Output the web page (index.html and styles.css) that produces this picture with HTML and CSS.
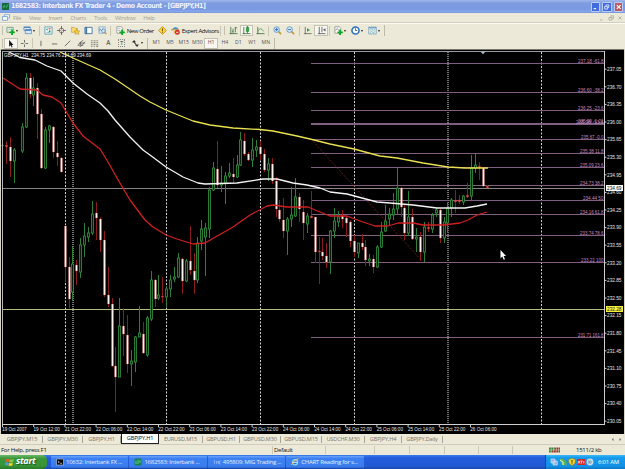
FILE: index.html
```html
<!DOCTYPE html>
<html lang="en">
<head>
  <meta charset="UTF-8" />
  <meta name="viewport" content="width=device-width, initial-scale=1.0"/>
  <title>1682583: Interbank FX Trader 4 - Demo Account - [GBPJPY,H1]</title>
  <link rel="stylesheet" href="styles.css">
</head>
<body>
  <div class="titlebar">
    <svg class="logo" viewBox="0 0 8 8"><rect width="8" height="8" rx="1" fill="#14683c"/><path d="M1.5 6V3M3 5V2M5 6V3M6.5 4V1.5" stroke="#55c47c" stroke-width=".8"/></svg>
    <span class="title">1682583: Interbank FX Trader 4 - Demo Account - [GBPJPY,H1]</span>
    <div class="winbtns">
      <svg viewBox="0 0 9 9"><path d="M2 6.5H5" stroke="#fff" stroke-width="1.4"/></svg>
      <svg viewBox="0 0 9 9"><path d="M3.5 3.5V2H7V5H5.5M2 4H5.5V7H2Z" stroke="#fff" fill="none" stroke-width=".9"/></svg>
      <svg class="close" viewBox="0 0 9 9"><path d="M2.2 2.2 6.8 6.8M6.8 2.2 2.2 6.8" stroke="#fff" stroke-width="1.3"/></svg>
    </div>
  </div>

  <div class="menubar">
    <svg class="logo" viewBox="0 0 8 7"><path d="M2.5 3V.7H7.5V4H6M.5 2.5H5.5V6.3H.5Z" fill="#fff" stroke="#79a7d8" stroke-width=".9"/></svg>
    <span>File</span><span>View</span><span>Insert</span><span>Charts</span><span>Tools</span><span>Window</span><span>Help</span>
    <svg class="mdi" viewBox="0 0 24 6"><path d="M1 5H3.5M12 2V.8H14.5V3.5H13.3M10 2.5H13V5H10ZM19.5 1.5 22.5 4.5M22.5 1.5 19.5 4.5" fill="none" stroke="#a9a797" stroke-width=".8"/></svg>
  </div>

  <div class="toolbar main">
    <i class="grip"></i>
    <div class="drop"><svg viewBox="0 0 10 10"><path d="M1 1.5H8V7H1Z" fill="#e8f5e8" stroke="#5a8c69" stroke-width=".8"/><path d="M2.5 5 4 3 5 4 7 2.5" stroke="#4a9aa5" fill="none" stroke-width=".6"/><path d="M6.8 4V10M3.8 7H9.8" stroke="#12a522" stroke-width="2"/></svg></div>
    <div class="drop"><svg viewBox="0 0 10 10"><path d="M1 1H8V5H1ZM2.5 4H9.5V8.5H2.5Z" fill="#d6e8fa" stroke="#5688bb" stroke-width=".8"/><path d="M1 1.5H8M2.5 4.5H9.5" stroke="#3e77bb"/></svg></div>
    <i class="sep"></i>
    <div class="btn"><svg viewBox="0 0 10 10"><path d="M1 1H9V9H1Z" fill="#f4faff" stroke="#5f9dc4"/><path d="M2 4 4 2.5 4 5ZM4.5 7.5 6.5 4 7.5 7Z" fill="#209a42"/><path d="M5 3H7.5M3 7H4" stroke="#d04a32"/></svg></div>
    <div class="btn"><svg viewBox="0 0 10 10"><circle cx="5" cy="5" r="2.6" fill="none" stroke="#666" stroke-width=".8"/><path d="M5 0V4M5 6V10M0 5H4M6 5H10" stroke="#555" stroke-width=".9"/></svg></div>
    <div class="btn"><svg viewBox="0 0 10 10"><path d="M.5 1.5H3.5L4.5 2.5H7V7H.5Z" fill="#f7db72" stroke="#b58c26" stroke-width=".6"/><path d="M6.5 3.5 7.4 5.5 9.7 5.7 8 7.2 8.6 9.5 6.5 8.3 4.4 9.5 5 7.2 3.4 5.7 5.6 5.5Z" fill="#ffcf2d" stroke="#aa7d17" stroke-width=".5"/></svg></div>
    <div class="btn"><svg viewBox="0 0 10 10"><path d="M1 1.5H9V8.5H1Z" fill="#fff" stroke="#3f75a8"/><path d="M2.5 1V9" stroke="#3f75a8" stroke-width="2"/></svg></div>
    <div class="btn"><svg viewBox="0 0 10 10"><path d="M1 1H8V8H1Z" fill="#edf5fb" stroke="#7399bc" stroke-width=".8"/><path d="M2 6V3L4 5 6 2" fill="none" stroke="#397da9" stroke-width=".8"/><circle cx="6" cy="5.5" r="2" fill="#d5e8f8" stroke="#4a79a5" stroke-width=".7"/><path d="M7.5 7 9.5 9" stroke="#c09238" stroke-width="1.2"/></svg></div>
    <i class="sep"></i>
    <div class="order"><svg viewBox="0 0 10 10"><path d="M1 .8H6L7.5 2.5V8H1Z" fill="#fff" stroke="#708070" stroke-width=".7"/><path d="M2 3H5M2 5H5" stroke="#789" stroke-width=".6"/><path d="M6.8 4V10M3.8 7H9.8" stroke="#12a522" stroke-width="2"/></svg><span>New Order</span></div>
    <div class="warn"><svg viewBox="0 0 10 10"><path d="M5 .6 9.4 5 5 9.4 .6 5Z" fill="#fbd23d" stroke="#bd8a1c" stroke-width=".8"/><path d="M5 2.6V5.8M5 6.5V7.5" stroke="#725010"/></svg></div>
    <div class="expert"><svg viewBox="0 0 10 10"><path d="M1 4Q5-2 9 4Z" fill="#4d93ca"/><path d="M0 4.3H9" stroke="#b88b25"/><path d="M2 5H7V8H3Z" fill="#f1cf77"/><circle cx="7" cy="7" r="2.8" fill="#d43425"/><path d="M5.8 7H8.2" stroke="#fff"/></svg><span>Expert Advisors</span></div>
    <i class="sep"></i><i class="grip"></i>
    <div class="btn"><svg viewBox="0 0 10 10"><path d="M2 1V9M0.5 8.5H9.5M4.5 3V8M7 1V7M3.5 6H4.5M7 2H9" stroke="#3b6b3b" stroke-width=".9"/></svg></div>
    <div class="btn pressed"><svg viewBox="0 0 10 10"><path d="M2 1V9M0.5 8.5H9.5M6 0V8" stroke="#3b6b3b" stroke-width=".9"/><path d="M4.8 1.5H7.5V6H4.8Z" fill="#26b53b" stroke="#137323" stroke-width=".6"/></svg></div>
    <div class="btn"><svg viewBox="0 0 10 10"><path d="M2 1V9M0.5 8.5H9.5" stroke="#3b6b3b" stroke-width=".9"/><path d="M2 6Q5 0 8.5 6" fill="none" stroke="#43a152" stroke-width=".9"/></svg></div>
    <i class="sep"></i>
    <div class="btn"><svg viewBox="0 0 10 10"><path d="M6 6 9 9" stroke="#c9982f" stroke-width="1.8"/><circle cx="4" cy="4" r="3.1" fill="#d9edff" stroke="#5b94c8"/><path d="M2.3 4H5.7M4 2.3V5.7" stroke="#29649b"/></svg></div>
    <div class="btn"><svg viewBox="0 0 10 10"><path d="M6 6 9 9" stroke="#c9982f" stroke-width="1.8"/><circle cx="4" cy="4" r="3.1" fill="#d9edff" stroke="#5b94c8"/><path d="M2.3 4H5.7" stroke="#29649b"/></svg></div>
    <i class="sep"></i>
    <div class="btn"><svg viewBox="0 0 10 10"><path d="M2.5 1V9M1 8.5H9.5" stroke="#596859" stroke-width=".9"/><path d="M4.5 2.5 8 4.5 4.5 6.5Z" fill="#2ca13d"/></svg></div>
    <div class="btn pressed"><svg viewBox="0 0 10 10"><path d="M2.5 1V9M1 8.5H9.5M5.5 1V7" stroke="#555" stroke-width=".9"/><path d="M9.5 2.5 6.5 4.2 9.5 6Z" fill="#666"/></svg></div>
    <i class="sep"></i>
    <div class="drop"><svg viewBox="0 0 10 10"><path d="M1 .8H6L7.5 2.5V8H1Z" fill="#fff" stroke="#708070" stroke-width=".7"/><path d="M2 5Q4 0 5 5" stroke="#666" fill="none" stroke-width=".7"/><path d="M6.8 4V10M3.8 7H9.8" stroke="#12a522" stroke-width="2"/></svg></div>
    <div class="drop"><svg viewBox="0 0 10 10"><circle cx="5" cy="5" r="4" fill="#fff" stroke="#2971c0" stroke-width="1.7"/><path d="M5 2.5V5H7" fill="none" stroke="#333" stroke-width=".8"/></svg></div>
    <div class="drop"><svg viewBox="0 0 10 10"><path d="M.8 1.2H9.2V8.8H.8Z" fill="#e8f4fb" stroke="#6c96b8" stroke-width=".8"/><path d="M1 2H9" stroke="#6496c4" stroke-width="1.3"/><path d="M2 5 4 3.5 6 5 8 3.5M2 7.5 4 6 6 7.5 8 6" fill="none" stroke="#5e9a7d" stroke-width=".7"/></svg></div>
    <i class="end"></i>
  </div>

  <div class="toolbar tools">
    <i class="grip"></i>
    <div class="btn pressed"><svg viewBox="0 0 10 10"><path d="M3.5 1V8.5L5.2 7 6.3 9.5 7.3 9 6.2 6.6H8.3Z" fill="#111"/></svg></div>
    <div class="btn"><svg viewBox="0 0 10 10"><path d="M5 1V4M5 6V9M1 5H4M6 5H9" stroke="#555" stroke-width=".9"/></svg></div>
    <i class="sep"></i>
    <div class="btn"><svg viewBox="0 0 10 10"><path d="M5.5 2V8" stroke="#555" stroke-width=".9"/></svg></div>
    <div class="btn"><svg viewBox="0 0 10 10"><path d="M2 5.5H8" stroke="#555" stroke-width=".9"/></svg></div>
    <div class="btn"><svg viewBox="0 0 10 10"><path d="M2 8 8 2" stroke="#555" stroke-width=".9"/></svg></div>
    <div class="btn"><svg viewBox="0 0 10 10"><path d="M1 7 7 1M3 9 9 3M2 4.5H9M1 7H7M4 3V7" stroke="#555" stroke-width=".8"/></svg></div>
    <div class="btn"><svg viewBox="0 0 10 10"><path d="M1 2H9M1 4H9M1 6H9M1 8H6" stroke="#666" stroke-width=".8" stroke-dasharray="1.2 .5"/><path d="M7 8H9" stroke="#444"/></svg></div>
    <div class="btn letter">A</div>
    <div class="btn letter"><span class="boxed">T</span></div>
    <div class="drop"><svg viewBox="0 0 10 10"><path d="M1 3.5 3.5 1 5.5 3.5H4.3L6 6.2H8.8L6.8 9 4.5 6.8H5.3L3 3.8Z" fill="#333"/></svg></div>
    <i class="end"></i>
    <div class="period">M1</div><div class="period">M5</div><div class="period">M15</div><div class="period">M30</div><div class="period pressed">H1</div><div class="period">H4</div><div class="period">D1</div><div class="period">W1</div><div class="period">MN</div>
    <i class="end"></i>
  </div>

  <svg class="chart" id="chart" viewBox="0 49 625 385" width="625" height="385"></svg>

  <div class="tabs">
    <span>GBPJPY,M15</span><span>GBPJPY,M30</span><span>GBPJPY,H1</span><span class="active">GBPJPY,H1</span><span>EURUSD,M15</span><span>GBPUSD,H1</span><span>GBPUSD,M30</span><span>GBPUSD,M15</span><span>USDCHF,M30</span><span>GBPJPY,H4</span><span>GBPJPY,Daily</span>
    <svg viewBox="0 0 12 5"><path d="M3.5 1V4L1.8 2.5ZM9.5 1V4L11.2 2.5Z" fill="#666"/></svg>
  </div>

  <div class="status">
    <span>For Help, press F1</span><span>Default</span><span></span><span></span><span></span><span></span><span></span>
    <span class="traffic"><svg viewBox="0 0 12 6"><path d="M0 1.5H6M0 4.5H3" stroke="#2f8b36" stroke-width="2.6" stroke-dasharray="2 .5"/><path d="M6 1.5H12M3 4.5H12" stroke="#913c2c" stroke-width="2.6" stroke-dasharray="2 .5"/></svg>1511/2 kb</span>
  </div>

  <div class="taskbar">
    <div class="start"><svg viewBox="0 0 10 10"><path d="M1 2Q3 .5 4.7 2L4 5Q2.5 4 .4 5Z" fill="#ec5a2c"/><path d="M5.3 2Q7.5 3 9.7 1.7L9 5Q7 6 4.7 5Z" fill="#86cd45"/><path d="M.3 5.7Q2.5 4.6 4 5.8L3.3 9Q1.5 7.8-.3 9Z" fill="#5b91ef"/><path d="M4.6 6Q7 7 8.8 6L8 9Q6 10 3.9 9Z" fill="#f8cf37"/></svg><span>start</span></div>
    <div class="task"><svg viewBox="0 0 8 8"><path d="M.5 1H7.5V7H.5Z" fill="#0a0a0a" stroke="#aab8d8" stroke-width=".7"/><path d="M2 3 3.3 4 2 5M4 5.3H6" fill="none" stroke="#ddd" stroke-width=".7"/></svg><span>10632: Interbank FX ...</span></div>
    <div class="task"><svg viewBox="0 0 8 8"><rect x=".5" y=".5" width="7" height="7" rx="1" fill="#178452"/><path d="M2 6V3M4 6V2M6 5V2" stroke="#75dc9c" stroke-width=".8"/></svg><span>1682583: Interbank ...</span></div>
    <div class="task"><svg viewBox="0 0 8 8"><path d="M.5 3H2.5M1.5 3V6M3.5 6V3L4.5 4.5 5.5 3V6M7.8 3H6.5V6H7.8" fill="none" stroke="#9abdf3" stroke-width=".7"/></svg><span>495809: MIG Trading ...</span></div>
    <div class="task"><svg viewBox="0 0 8 8"><circle cx="4" cy="4.2" r="2.6" fill="#2d72d0" stroke="#8fd3ff" stroke-width="1.2"/><path d="M2 4.3H6.5" stroke="#d9f1ff"/><path d="M.5 7Q1 3 7.5.7" fill="none" stroke="#f3cb48" stroke-width=".9"/></svg><span>CHART Reading for s...</span></div>
    <div class="tray">
      <svg viewBox="0 0 8 8"><path d="M1 1H5V5H1ZM3 3H7.3V7H3Z" fill="#94b2d9" stroke="#e3efff" stroke-width=".6"/></svg>
      <svg viewBox="0 0 8 8"><path d="M.5 1 4 .5 7.5 4V7.5L3 7Z" fill="#60b24b"/><path d="M1 2 4 4V7" stroke="#e7f7d9" fill="none"/></svg>
      <svg viewBox="0 0 8 8"><path d="M4 .3 7.3 1.5V4Q7 6.5 4 7.8 1 6.5.7 4V1.5Z" fill="#f5d331" stroke="#8a7b20" stroke-width=".5"/><path d="M4 2V4.7M4 5.4V6.3" stroke="#443a00"/></svg>
      <svg viewBox="0 0 8 8"><rect y="1" width="8" height="6" fill="#d32a32"/><path d="M1 5.5 2 3 3 5.5M3.5 3H5.5M4.5 3V5.5M6.8 3V5.5" stroke="#fff" stroke-width=".7" fill="none"/></svg>
      <svg viewBox="0 0 8 8"><circle cx="4" cy="4" r="3.4" fill="#c9dcf0"/><path d="M2 3.2H3.5V5H2M4.5 2.5Q6 4 4.5 5.7" stroke="#6c819c" stroke-width=".8" fill="none"/></svg>
      <span>6:01 AM</span>
    </div>
  </div>

  <script src="chart.js"></script>
</body>
</html>
```

FILE: styles.css
```css
* {
  box-sizing: border-box;
}
body {
  margin: 0;
  width: 625px;
  height: 469px;
  overflow: hidden;
  background: #ece9d8;
  font-family: "Open Sans", "Noto Sans", sans-serif;
  font-size: 6px;
  line-height: 1;
  color: #111;
  white-space: nowrap;
}
svg {
  display: block;
  flex: none;
}
.titlebar {
  height: 13px;
  display: flex;
  align-items: center;
  padding: 0 2px;
  background: linear-gradient(#a0b8ec, #7d9be0 25%, #7b9ae2 75%, #86a8ec 90%, #7591d4);
}
.titlebar .logo {
  width: 7px;
  height: 7px;
  margin-right: 2px;
}
.title {
  font-family: "DejaVu Sans Condensed", "DejaVu Sans", sans-serif;
  font-weight: bold;
  font-size: 7px;
  letter-spacing: -0.45px;
  color: #edf2ff;
}
.winbtns {
  display: flex;
  gap: 2px;
  margin-left: auto;
}
.winbtns svg {
  width: 9.5px;
  height: 10px;
  border-radius: 1px;
  border: 0.5px solid #b9ccf8;
  background: #426bdc;
}
.winbtns .close {
  background: #bd5a5d;
}
.menubar {
  height: 10px;
  display: flex;
  align-items: center;
  padding: 0 2px;
  gap: 8px;
  color: #a5a292;
  font-size: 6px;
  letter-spacing: -0.4px;
  border-bottom: 1px solid #d2cfbe;
}
.menubar .logo {
  width: 8px;
  height: 7px;
  margin-right: -5px;
}
.menubar .mdi {
  width: 24px;
  height: 6px;
  margin-left: auto;
}
.toolbar {
  display: flex;
  align-items: center;
  background: #ece9d8;
}
.toolbar svg {
  width: 9px;
  height: 9px;
}
.main {
  height: 14px;
  border-top: 1px solid #fbfaf4;
}
.tools {
  height: 12px;
}
.grip {
  width: 1px;
  height: 9px;
  margin: 0 1px 0 2px;
  background: #c3c0ae;
}
.sep {
  width: 1px;
  height: 10px;
  margin: 0 1.3px;
  background: #c9c6b4;
}
.tools .sep {
  margin: 0 1px;
}
.end {
  width: 1px;
  height: 11px;
  margin: 0 1.5px;
  background: #bdbaa8;
}
.btn {
  width: 13.5px;
  height: 11px;
  display: flex;
  align-items: center;
  justify-content: center;
}
.pressed {
  background: #f8f7f1;
  border: 1px solid #c5c2b2;
}
.drop {
  width: 17px;
  display: flex;
  align-items: center;
  padding-left: 2px;
  gap: 1px;
}
.drop::after {
  content: "";
  border: 1.5px solid transparent;
  border-top: 2px solid #222;
  border-bottom: 0;
}
.order,
.warn,
.expert {
  display: flex;
  align-items: center;
  gap: 2px;
  font-size: 6px;
  color: #111;
}
.order {
  width: 42.5px;
  padding-left: 3px;
}
.order span {
  letter-spacing: -0.4px;
}
.warn {
  width: 14px;
  padding-left: 2.5px;
}
.expert {
  width: 49.5px;
  padding-left: 1.5px;
}
.expert span {
  letter-spacing: -0.42px;
}
.letter {
  font-size: 6.5px;
  color: #333;
}
.boxed {
  border: 1px dotted #888;
  padding: 0 1px;
  font-size: 6px;
}
.period {
  width: 13.7px;
  height: 11px;
  display: flex;
  align-items: center;
  justify-content: center;
  font-size: 5.2px;
  color: #555;
}
.chart {
  background: #000;
  font-family: "Liberation Sans", sans-serif;
}
.tabs {
  height: 10px;
  display: grid;
  grid-template-columns: 43px 40px 38px 38px 44px 37px 41px 41px 43px 37px 41px 1fr;
  align-items: center;
  font-size: 5.6px;
  letter-spacing: -0.15px;
  color: #77756a;
  background: #ece9d8;
}
.tabs span {
  text-align: center;
  border-right: 1px solid #a7a494;
  line-height: 7px;
}
.tabs span:first-child {
  padding-left: 2px;
}
.tabs .active {
  height: 10px;
  line-height: 9px;
  background: #fff;
  color: #111;
  border: 1px solid #222;
  border-top: 0;
}
.tabs svg {
  width: 12px;
  height: 5px;
  justify-self: end;
  margin-right: 3px;
}
.status {
  height: 11px;
  display: grid;
  grid-template-columns: 273px 53px 49px 35px 35px 34px 34px 1fr;
  align-items: center;
  border-top: 1px solid #cfccbb;
  font-size: 6px;
  letter-spacing: -0.25px;
}
.status span {
  height: 8px;
  padding-left: 1px;
  line-height: 8px;
  border-right: 1px solid #cbc8b7;
}
.status .traffic {
  display: flex;
  align-items: center;
  gap: 16px;
  padding-left: 36px;
  border: 0;
}
.traffic svg {
  width: 11px;
  height: 6px;
}
.taskbar {
  height: 14px;
  display: flex;
  align-items: stretch;
  background: linear-gradient(#3a7cf0, #245edb 20%, #2259d4 80%, #1b47ac);
  color: #fff;
}
.start {
  width: 47px;
  display: flex;
  align-items: center;
  gap: 2px;
  padding-left: 5px;
  margin-right: 4px;
  border-radius: 0 5px 5px 0;
  background: linear-gradient(#6ab86a, #3a963a 25%, #389438 75%, #2a7a2b);
  font-size: 9px;
  font-weight: bold;
  font-style: italic;
  text-shadow: 1px 1px 1px #1f5a20;
}
.start svg {
  width: 9px;
  height: 10px;
}
.start span {
  letter-spacing: -0.3px;
  line-height: 10px;
  margin-top: -2px;
}
.task {
  width: 77.4px;
  display: flex;
  align-items: center;
  gap: 2px;
  padding-left: 5px;
  margin: 1px 1px 1px 0;
  border-radius: 1px;
  background: linear-gradient(#6ba4fa, #3c81f3 20%, #3b7def 85%, #2d66d2);
  font-size: 6px;
  letter-spacing: -0.25px;
  color: #e6efff;
}
.task svg {
  width: 8px;
  height: 8px;
}
.tray {
  width: 80px;
  margin-left: auto;
  display: flex;
  align-items: center;
  gap: 1px;
  padding-left: 4px;
  border-left: 1px solid #1145a8;
  background: linear-gradient(#3cb8f7, #149aec 20%, #1290e6 80%, #0f75c4);
}
.tray svg {
  width: 8px;
  height: 8px;
}
.tray span {
  margin-left: 3px;
  font-size: 6px;
  letter-spacing: -0.25px;
}
```

FILE: chart.js
```js
const chart = document.getElementById('chart');
let out = '';

function line(x1, y1, x2, y2, color, extra) {
  out += `<line x1="${x1}" y1="${y1}" x2="${x2}" y2="${y2}" stroke="${color}" ${extra || ''}/>`;
}

function rect(x, y, w, h, fill, extra) {
  out += `<rect x="${x}" y="${y}" width="${w}" height="${h}" fill="${fill}" ${extra || ''}/>`;
}

function text(x, y, str, len, color, size) {
  out += `<text x="${x}" y="${y}" font-size="${size || 5}" fill="${color}" textLength="${len}" lengthAdjust="spacingAndGlyphs">${str}</text>`;
}

function curve(points, color) {
  out += `<polyline points="${points}" fill="none" stroke="${color}" stroke-width="1.3" stroke-linejoin="round"/>`;
}

// bar index, high, low, body top, body bottom, up (1) or down (0)
const candles = [
  [0,137,147,145,146,0],[1,141,164,145,147,0],[2,137,177,147,161,0],[3,148,183,150,161,1],
  [5,123,153,127,151,1],[6,73,128,78,127,1],[7,73,98,78,94,0],[8,77,106,88,95,1],
  [9,83,139,88,114,0],[10,109,169,114,168,0],[11,127,169,130,168,1],[12,125,143,126,130,1],
  [13,126,158,127,152,0],[14,141,166,153,157,0],[15,157,172,158,172,0],[16,225,281,226,267,0],
  [17,257,308,267,299,0],[18,247,300,264,292,1],[19,260,285,265,271,0],[20,238,278,245,272,1],
  [21,223,257,236,245,1],[22,227,242,233,237,1],[23,201,235,214,233,1],[24,202,240,213,218,0],
  [25,217,252,219,240,0],[26,231,297,240,295,0],[27,267,307,295,304,0],[28,298,367,304,366,0],
  [29,347,412,366,377,0],[30,298,377,326,377,1],[31,308,356,326,334,0],[32,315,373,335,364,0],
  [33,350,386,361,364,1],[34,336,372,337,362,1],[35,306,337,333,337,1],[36,322,354,334,353,0],
  [37,316,357,318,355,1],[38,271,321,280,319,1],[39,279,307,280,299,0],[40,275,300,295,298,1],
  [41,277,303,296,297,0],[42,286,307,289,297,1],[43,275,297,280,289,1],[44,267,282,277,279,1],
  [45,253,278,258,277,1],[46,258,294,259,281,0],[47,259,282,261,281,1],[48,226,275,261,270,0],
  [49,253,294,271,280,0],[50,237,283,243,280,1],[51,220,250,229,241,1],[52,223,276,228,237,1],
  [53,187,238,190,229,1],[54,162,191,168,190,1],[55,141,188,169,185,0],[56,166,192,183,185,1],
  [57,172,204,176,183,1],[58,163,178,173,176,1],[59,158,183,174,177,0],[60,155,178,165,177,1],
  [61,132,166,140,165,1],[62,133,156,141,154,0],[63,152,161,154,160,0],[64,138,167,150,160,1],
  [65,140,157,147,150,1],[66,141,160,147,154,0],[67,149,172,154,170,0],[68,158,181,164,170,1],
  [69,158,184,164,181,0],[70,177,217,181,209,0],[71,200,222,210,219,0],[72,198,238,220,231,0],
  [73,217,255,219,231,1],[74,187,227,215,219,1],[75,178,217,197,216,1],[76,193,222,197,209,0],
  [77,200,240,212,223,0],[78,213,233,216,224,1],[79,191,218,216,218,0],[80,217,263,217,252,0],
  [81,237,284,251,252,0],[82,238,260,252,256,0],[83,243,268,256,262,0],[84,230,274,231,262,1],
  [85,208,238,221,231,1],[86,211,227,217,222,1],[87,210,228,216,219,0],[88,216,237,218,223,0],
  [89,220,247,222,241,0],[90,235,257,241,252,0],[91,243,258,243,253,1],[92,234,250,243,247,0],
  [93,240,266,247,260,0],[94,254,266,259,261,1],[95,255,273,259,267,0],[96,245,268,247,267,1],
  [97,222,248,232,247,1],[98,205,232,221,231,1],[99,208,225,214,219,1],[100,193,220,209,215,1],
  [101,168,215,188,209,1],[102,187,217,188,207,0],[103,205,240,208,233,0],[104,191,236,217,233,1],
  [105,209,240,217,239,0],[106,228,252,237,239,1],[107,232,261,237,252,0],[108,222,262,227,252,1],
  [109,222,232,227,229,0],[110,213,233,215,229,1],[111,208,217,210,213,1],[112,208,243,210,238,0],
  [113,217,243,222,238,1],[114,202,233,208,223,1],[115,198,217,200,208,1],[116,190,213,200,202,0],
  [117,195,204,200,202,0],[118,195,205,196,202,1],[119,183,198,195,197,0],[120,155,200,168,196,1],
  [121,154,173,165,168,1],[122,162,180,166,168,0],[123,167,187,168,186,0],[124,185,188,186,188,0]
];

const fibs = [
  [63.5, '237.18 -61.8', 578], [92.5, '236.60 -38.2', 578], [110.5, '236.25 -23.6', 578],
  [123.5, '235.99 -1.21', 578], [124.5, '235.98 -13.6', 576], [139.5, '235.67 -0.0', 581],
  [153.5, '235.38 11.8', 580], [167.5, '235.09 23.6', 580], [185.5, '234.73 38.2', 580],
  [200.5, '234.44 50', 583], [214.5, '234.16 61.8', 580], [235.5, '233.74 78.6', 580],
  [262.5, '233.22 100', 581], [337.5, '231.71 161.8', 578]
];

const dates = ['19 Oct 2007', '19 Oct 12:00', '21 Oct 22:00', '22 Oct 06:00', '22 Oct 14:00',
  '22 Oct 22:00', '23 Oct 06:00', '23 Oct 14:00', '23 Oct 22:00', '24 Oct 06:00', '24 Oct 14:00',
  '24 Oct 22:00', '25 Oct 06:00', '25 Oct 14:00', '25 Oct 22:00', '26 Oct 06:00'];

// window frame
rect(0, 49, 625, 1, '#77756d');
rect(0, 49, 1, 385, '#d8d5c6');
rect(624, 49, 1, 385, '#d8d5c6');

// day separators
[65.5, 166.5, 260.5, 354.5, 541.5].forEach(x => line(x, 52, x, 424, '#d2d2d2', 'stroke-dasharray="2 1.5"'));
[73, 448].forEach(x => line(x, 52, x, 424, '#777', 'stroke-width="2" stroke-dasharray="1 1"'));

// price levels
line(2, 188.5, 604, 188.5, '#858585');
line(2, 309.5, 604, 309.5, '#b3bd84');
fibs.forEach(([y, label, x]) => {
  line(311, y, 604, y, '#805f80');
  text(x, y - 1, label, 603.5 - x, '#c58bc5', 5);
});
line(311, 139, 422, 261, '#8b2020', 'stroke-width=".8" stroke-dasharray="2 1.5"');

candles.forEach(([i, high, low, top, bottom, up]) => {
  const x = Math.floor(2.67 + i * 3.906) + 0.5;
  const h = Math.max(bottom - top, 1);
  line(x, high, x, low, up ? '#2d8036' : '#8a1c1c');
  if (up) {
    rect(x - 1, top, 2, h, '#071c09', 'stroke="#369641" stroke-width=".8"');
  } else {
    rect(x - 1, top, 2, h, h > 2 ? '#fff2ee' : '#e04a40', 'stroke="#c63c34" stroke-width=".25"');
  }
});

// moving averages
curve('60,52 73,58 100,70 115,79 140,96 150,102 166,110 193,121 210,125 233,128 260,129.5 273,131 297,136 310,139 330,144 354,149 380,156 397,158 423,163 448,167 465,168 488,168', '#e8e052');
curve('8,51.5 20,57.5 35,60 47,66 61,71 73,83 87,94 100,103 108,111 115,120 130,137 143,150 150,155 166,167 183,177 198,183 205,184 237,183 263,179 277,179 293,183 307,185 320,188 330,192 347,194 377,202 390,203 413,205 437,208 465,208 477,206 487,204', '#f4f4f4');
curve('3,78 20,89 37,90 43,95 52,97 61,103 67,113 73,123 83,136 100,149 108,162 117,178 130,200 145,220 153,227 166,235 177,239 193,244 205,243 212,239 233,227 250,215 267,206 273,205 287,207 308,207 320,212 330,216 347,216 360,221 375,226 388,226 398,223 413,223 423,225 443,225 460,223 468,220 477,215 487,212', '#cf2020');

// axes
line(2.5, 51, 2.5, 425, '#b8b8b8');
line(2, 51.5, 605, 51.5, '#9c9c9c');
line(604.5, 51, 604.5, 425, '#d0d0d0');
line(2, 424.5, 605, 424.5, '#d0d0d0');
out += '<path d="M480.5 51.5H485.5L483 54.3Z" fill="#aebdc8"/>';

for (let n = 0; n < 21; n++) {
  const y = 69.2 + n * 17.6;
  line(605, y, 606.5, y, '#ccc');
  text(607, y + 1.8, (237.05 - n * 0.35).toFixed(2), 14.5, '#e6e6e6', 5.2);
}
rect(606, 185, 17, 6, '#fff');
text(607, 190, '234.69', 14.5, '#000', 5.2);
rect(606, 306, 17, 6, '#f4ee3c');
text(607, 311, '232.28', 14.5, '#222', 5.2);

dates.forEach((d, n) => {
  const x = 2.3 + n * 31.2;
  line(x + 0.2, 425, x + 0.2, 427, '#ccc');
  text(x, 431.2, d, n ? 26.3 : 24.5, '#e8e8e8', 5.2);
});
text(4, 57, 'GBPJPY,H1&#160; 234.75 234.76 234.69 234.69', 87, '#eee', 5.2);

// mouse pointer
out += '<path d="M500.5 250V258.3L502.3 256.6 503.7 259.8 505 259.2 503.6 256H506Z" fill="#fff"/>';

chart.innerHTML = out;
```
